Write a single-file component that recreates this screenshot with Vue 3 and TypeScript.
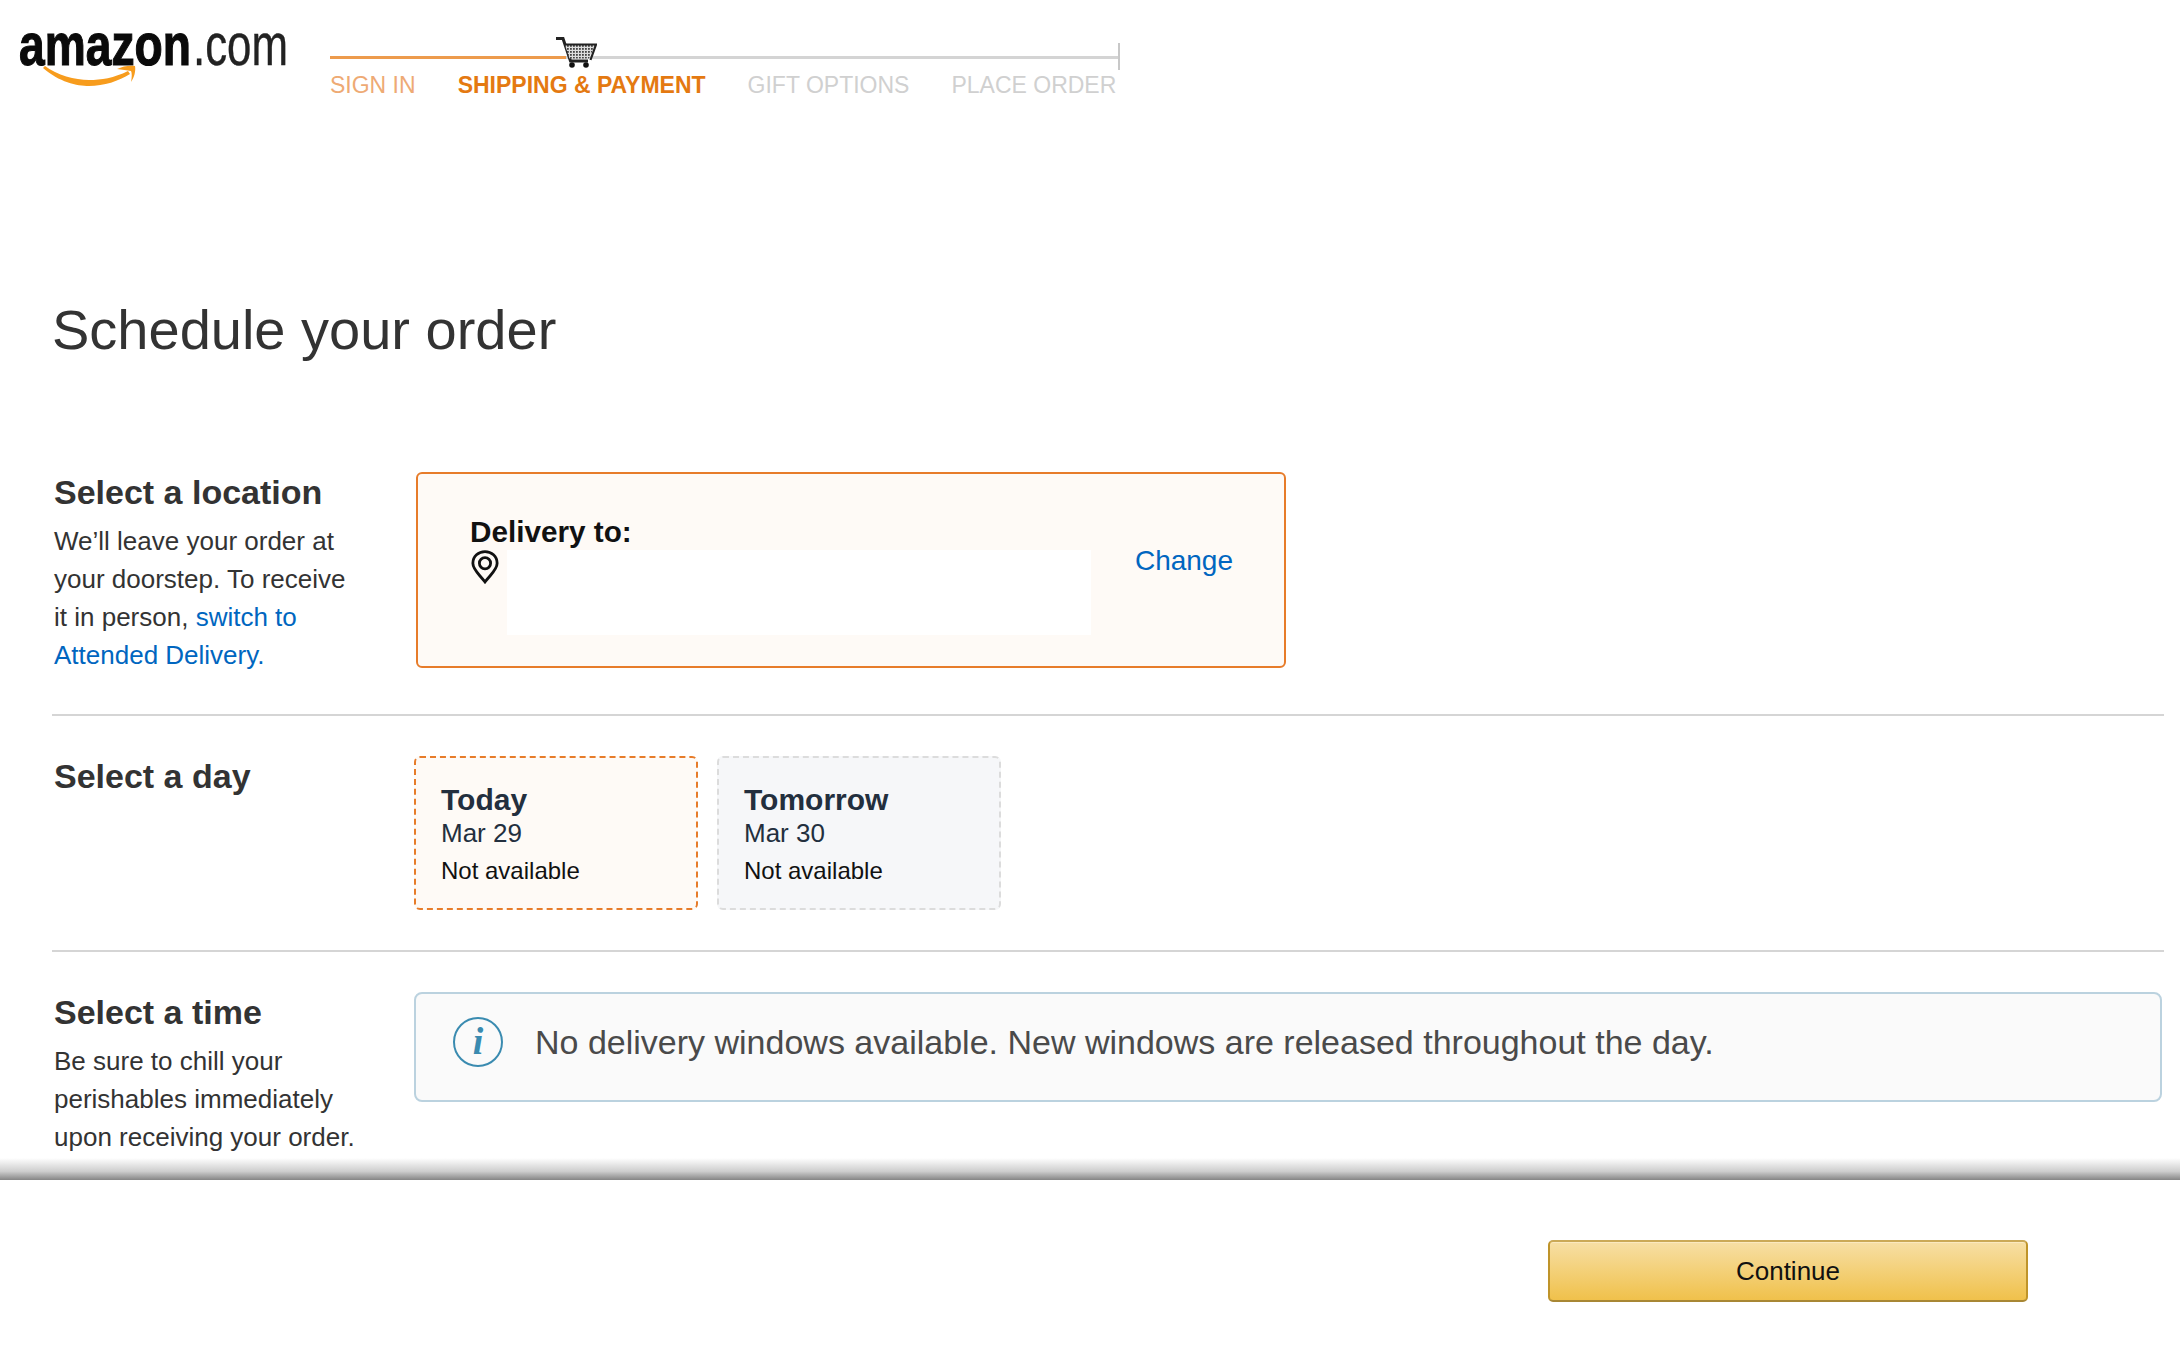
<template>
  <div class="page">
    <header class="top-bar">
      <svg class="logo" width="270" height="66" viewBox="0 0 270 66">
        <text class="logo-bold" x="0" y="35" textLength="172" lengthAdjust="spacingAndGlyphs">amazon</text>
        <text class="logo-thin" x="174" y="35" textLength="95" lengthAdjust="spacingAndGlyphs">.com</text>
        <path d="M24 38C40 52 58 56 70 56C85 56 100 51 111 44L109 41C95 48 82 50 70 50C56 50 38 45 26 36Z" fill="#f79c1d" />
        <path d="M98 39C104 36 111 35 116 36C117 41 115 48 112 52C113 47 113 43 112 41C108 40 103 40 98 39Z" fill="#f79c1d" />
      </svg>

      <div class="progress">
        <div class="track">
          <div class="track-done" />
          <svg class="cart" width="42" height="32" viewBox="0 0 42 32">
            <path d="M1 2.500H8L15.500 25H33" fill="none" stroke="#222" stroke-width="3" />
            <path d="M10 9H40L34 22.500H14.500Z" fill="url(#cartMesh)" stroke="none" />
            <path d="M10 8.500H41L35.500 24" fill="none" stroke="#222" stroke-width="2.200" />
            <circle cx="17" cy="29" r="2.800" fill="#111" />
            <circle cx="31" cy="29" r="2.800" fill="#111" />
            <defs>
              <pattern id="cartMesh" width="3" height="3" patternUnits="userSpaceOnUse">
                <rect width="3" height="3" fill="#ddd" />
                <rect width="1.800" height="1.800" fill="#444" />
              </pattern>
            </defs>
          </svg>
        </div>
        <ol class="steps">
          <li v-for="step in steps" :key="step.label" :class="['step', step.state]">{{ step.label }}</li>
        </ol>
      </div>
    </header>

    <main class="content">
      <h1 class="title">Schedule your order</h1>

      <section class="row row-location">
        <div class="side">
          <h2>Select a location</h2>
          <p>
            We’ll leave your order at your doorstep. To receive it in person,
            <a href="#">switch to Attended Delivery.</a>
          </p>
        </div>
        <div class="location-box">
          <div class="location-main">
            <div class="delivery-label">Delivery to:</div>
            <div class="address">
              <svg class="pin" width="28" height="34" viewBox="0 0 30 36">
                <path d="M15 34C9 26 2 21 2 14C2 6.500 8 1.500 15 1.500S28 6.500 28 14C28 21 21 26 15 34Z" fill="none" stroke="#111" stroke-width="3" />
                <circle cx="15" cy="14" r="6" fill="none" stroke="#111" stroke-width="3" />
              </svg>
              <div class="address-mask" />
            </div>
          </div>
          <a class="change" href="#">Change</a>
        </div>
      </section>

      <section class="row row-day">
        <div class="side">
          <h2>Select a day</h2>
        </div>
        <div class="days">
          <div v-for="day in days" :key="day.name" :class="['day', { selected: day.selected }]">
            <div class="day-name">{{ day.name }}</div>
            <div class="day-date">{{ day.date }}</div>
            <div class="day-status">Not available</div>
          </div>
        </div>
      </section>

      <section class="row row-time">
        <div class="side">
          <h2>Select a time</h2>
          <p>Be sure to chill your perishables immediately upon receiving your order.</p>
        </div>
        <div class="notice">
          <span class="info-icon">i</span>
          <span class="notice-text">No delivery windows available. New windows are released throughout the day.</span>
        </div>
      </section>
    </main>

    <footer class="bottom-bar">
      <button class="continue" type="button">Continue</button>
    </footer>
  </div>
</template>

<script setup lang="ts">
interface Step {
  label: string;
  state: 'done' | 'current' | 'todo';
}

interface Day {
  name: string;
  date: string;
  selected: boolean;
}

const steps: Step[] = [
  { label: 'SIGN IN', state: 'done' },
  { label: 'SHIPPING & PAYMENT', state: 'current' },
  { label: 'GIFT OPTIONS', state: 'todo' },
  { label: 'PLACE ORDER', state: 'todo' },
];

const days: Day[] = [
  { name: 'Today', date: 'Mar 29', selected: true },
  { name: 'Tomorrow', date: 'Mar 30', selected: false },
];
</script>

<style>
body {
  background: #fff;
}
</style>

<style scoped>
.page {
  display: flex;
  flex-direction: column;
  height: 1362px;
  overflow: hidden;
  font-family: 'Liberation Sans', Arial, sans-serif;
  color: #333;
}

.top-bar {
  display: flex;
  align-items: flex-start;
  height: 130px;
  padding: 30px 0 0 19px;
  box-sizing: border-box;
}

.logo {
  flex: none;
  overflow: visible;
}

.logo-bold {
  font: bold 60px 'Liberation Sans', Arial, sans-serif;
  fill: #0a0a0a;
  stroke: #0a0a0a;
  stroke-width: 1.2px;
}

.logo-thin {
  font: 60px 'Liberation Sans', Arial, sans-serif;
  fill: #222;
  stroke: #222;
  stroke-width: 0.4px;
}

.progress {
  width: 790px;
  margin-left: 41px;
}

.track {
  position: relative;
  height: 3px;
  margin-top: 26px;
  background: #d4d4d4;
}

.track::after {
  content: '';
  position: absolute;
  right: 0;
  top: -13px;
  width: 2px;
  height: 27px;
  background: #c8c8c8;
}

.track-done {
  width: 236px;
  height: 3px;
  background: #ed9b4d;
}

.cart {
  position: absolute;
  left: 225px;
  top: -20px;
}

.steps {
  display: flex;
  gap: 42px;
  margin: 13px 0 0;
  padding: 0;
  list-style: none;
  font-size: 23px;
  line-height: 27px;
  white-space: nowrap;
}

.step.done {
  color: #eeaa74;
}

.step.current {
  color: #e47911;
  font-weight: bold;
}

.step.todo {
  color: #d0d0d0;
}

.content {
  flex: 1;
  min-height: 0;
  padding: 0 16px 0 52px;
}

.title {
  margin: 168px 0 0;
  font-size: 56px;
  line-height: 64px;
  font-weight: normal;
}

.row {
  display: grid;
  grid-template-columns: 362px 1fr;
  border-bottom: 2px solid #d5d5d5;
}

.row-location {
  margin-top: 110px;
  height: 242px;
}

.row-day {
  padding-top: 40px;
  height: 236px;
  box-sizing: border-box;
}

.row-time {
  padding-top: 40px;
  border-bottom: 0;
}

.side {
  padding-left: 2px;
  width: 306px;
}

.side h2 {
  margin: 0;
  font-size: 34px;
  line-height: 40px;
  font-weight: bold;
}

.side p {
  margin: 10px 0 0;
  font-size: 26px;
  line-height: 38px;
}

.side a,
.change {
  color: #0066c0;
  text-decoration: none;
}

.location-box {
  display: flex;
  justify-content: space-between;
  width: 870px;
  height: 196px;
  margin-left: 2px;
  padding: 40px 51px 0 52px;
  box-sizing: border-box;
  background: #fefaf6;
  border: 2px solid #e77c2a;
  border-radius: 6px;
}

.location-main {
  flex: 1;
}

.delivery-label {
  font-size: 29.700px;
  line-height: 36px;
  font-weight: bold;
  color: #111;
}

.address {
  display: flex;
  gap: 8px;
}

.pin {
  flex: none;
  margin-left: 1px;
}

.address-mask {
  width: 584px;
  height: 85px;
  background: #fff;
}

.change {
  margin-top: 29px;
  font-size: 28px;
  line-height: 36px;
}

.days {
  display: flex;
  gap: 19px;
}

.day {
  width: 284px;
  height: 154px;
  padding: 24px 25px 0;
  box-sizing: border-box;
  background: #f6f7f9;
  border: 2px dashed #dcdcdc;
  border-radius: 6px;
}

.day.selected {
  background: #fefaf6;
  border-color: #e77c2a;
}

.day-name {
  font-size: 30px;
  line-height: 36px;
  font-weight: bold;
  color: #232f3e;
}

.day-date {
  font-size: 26px;
  line-height: 30px;
  color: #232f3e;
}

.day-status {
  margin-top: 8px;
  font-size: 24px;
  line-height: 30px;
  color: #111;
}

.notice {
  display: flex;
  align-items: flex-start;
  gap: 32px;
  height: 110px;
  margin-right: 2px;
  padding: 23px 37px;
  box-sizing: border-box;
  background: #fafafa;
  border: 2px solid #bbd2df;
  border-radius: 8px;
  font-size: 34px;
  line-height: 44px;
  color: #4a4a4a;
}

.notice-text {
  margin-top: 3px;
}

.info-icon {
  flex: none;
  width: 50px;
  height: 50px;
  box-sizing: border-box;
  border: 2px solid #3a8bb0;
  border-radius: 50%;
  font: italic bold 38px/44px 'Liberation Serif', serif;
  color: #3a8bb0;
  text-align: center;
}

.bottom-bar {
  position: relative;
  display: flex;
  justify-content: flex-end;
  height: 182px;
  padding: 60px 152px 0 0;
  box-sizing: border-box;
  background: #fff;
}

.bottom-bar::before {
  content: '';
  position: absolute;
  left: 0;
  right: 0;
  top: -22px;
  height: 22px;
  background: linear-gradient(to bottom, rgba(133, 133, 133, 0), rgba(133, 133, 133, 0.4) 60%, #858585);
}

.continue {
  width: 480px;
  height: 62px;
  padding: 0;
  border: 2px solid;
  border-color: #cba957 #bf942a #a88734;
  border-radius: 5px;
  background: linear-gradient(to bottom, #f7dfa5, #f0c14b);
  box-shadow: inset 0 1px 0 #fbe9c0;
  font: 26px 'Liberation Sans', Arial, sans-serif;
  color: #111;
}
</style>
